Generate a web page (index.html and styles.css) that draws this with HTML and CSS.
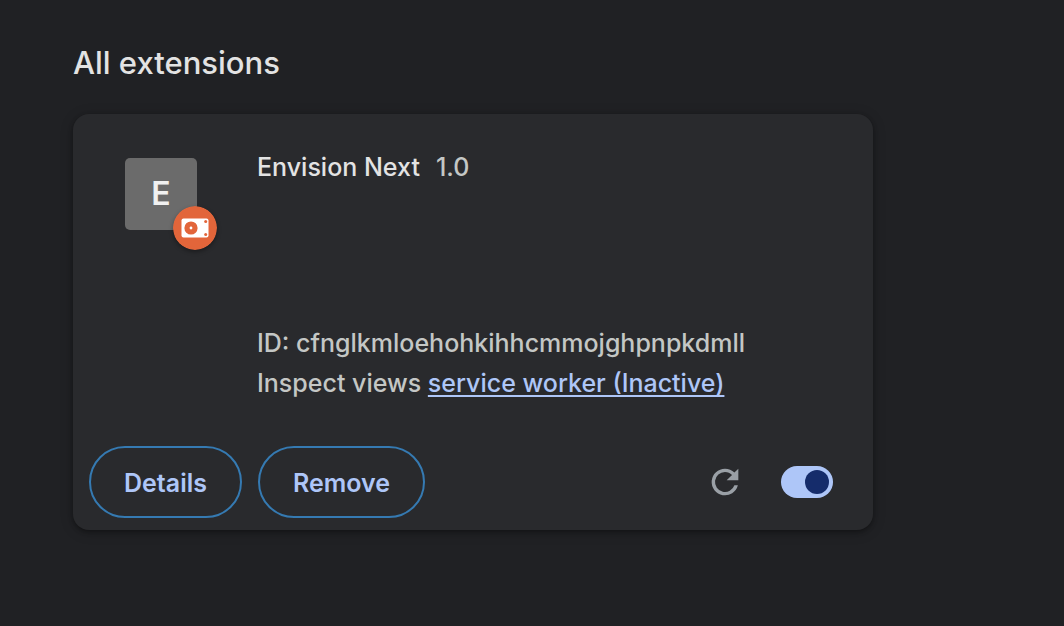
FILE: index.html
```html
<!DOCTYPE html>
<html lang="en">
<head>
<meta charset="utf-8">
<meta name="viewport" content="width=device-width, initial-scale=1">
<title>Extensions</title>
<link rel="stylesheet" href="styles.css">
</head>
<body>
<main class="page">
  <h1 class="heading">All extensions</h1>
  <article class="card">
    <div class="summary">
      <div class="icon-wrap">
        <div class="app-icon">E</div>
        <svg class="badge" viewBox="0 0 44 44" role="img" aria-label="Unpacked extension">
          <circle cx="22" cy="22" r="22" fill="#e2653a"/>
          <rect x="8.5" y="12.5" width="27" height="19" rx="2" fill="#fff"/>
          <circle cx="18" cy="22" r="6.6" fill="#e2653a"/>
          <circle cx="18" cy="22" r="1.4" fill="#fff"/>
          <circle cx="32.7" cy="15.5" r="1.5" fill="#e2653a"/>
          <circle cx="32.7" cy="28.5" r="1.5" fill="#e2653a"/>
        </svg>
      </div>
      <div class="content">
        <div class="title-row">
          <h2 class="name">Envision Next</h2>
          <span class="version">1.0</span>
        </div>
        <div class="info">
          <div>ID: cfnglkmloehohkihhcmmojghpnpkdmll</div>
          <div>Inspect views <a class="link" href="#">service worker (Inactive)</a></div>
        </div>
      </div>
    </div>
    <div class="actions">
      <button class="button" type="button">Details</button>
      <button class="button" type="button">Remove</button>
      <button class="reload" type="button" aria-label="Reload">
        <svg viewBox="0 0 24 24" width="40" height="40"><path fill="#9aa0a6" d="M17.65 6.35A7.96 7.96 0 0 0 12 4a8 8 0 1 0 7.73 10h-2.08A6 6 0 1 1 12 6c1.66 0 3.14.69 4.22 1.78L13 11h7V4z"/></svg>
      </button>
      <input class="toggle" type="checkbox" role="switch" aria-label="Enable Envision Next" checked>
    </div>
  </article>
</main>
</body>
</html>
```
FILE: styles.css
```css
* {
  box-sizing: border-box;
}

body {
  margin: 0;
  background: #202124;
  color: #e3e3e3;
  font-family: Inter, "Liberation Sans", sans-serif;
  font-size: 25px;
  font-weight: 500;
  line-height: 40px;
}

.page {
  padding: 42px 73px;
}

.heading {
  margin: 0 0 30px;
  font-size: 31px;
  font-weight: 500;
  line-height: 42px;
}

.card {
  max-width: 800px;
  border-radius: 16px;
  background: #292a2d;
  box-shadow: 0 2px 4px rgba(0, 0, 0, 0.3), 0 2px 12px 2px rgba(0, 0, 0, 0.15);
}

.summary {
  display: flex;
  gap: 60px;
  min-height: 320px;
  padding: 33px 40px 30px 52px;
}

.icon-wrap {
  position: relative;
  flex: none;
  width: 72px;
  height: 72px;
  margin-top: 11px;
}

.app-icon {
  width: 72px;
  height: 72px;
  border-radius: 5px;
  background: #6b6b6b;
  color: #f1f1f1;
  font-size: 32px;
  font-weight: 600;
  line-height: 72px;
  text-align: center;
}

.badge {
  position: absolute;
  right: -20px;
  bottom: -20px;
  width: 44px;
  height: 44px;
  border-radius: 50%;
  box-shadow: 0 2px 4px rgba(0, 0, 0, 0.35);
}

.content {
  display: flex;
  flex: 1;
  flex-direction: column;
  justify-content: space-between;
  min-width: 0;
}

.title-row {
  display: flex;
  gap: 16px;
}

.name {
  margin: 0;
  font-size: 25px;
  font-weight: 500;
}

.version,
.info {
  color: #c4c7c5;
}

.info {
  padding-bottom: 1px;
  overflow-wrap: anywhere;
}

.link {
  color: #aec6f8;
  text-decoration-thickness: 2px;
  text-underline-offset: 3px;
}

.actions {
  display: flex;
  align-items: center;
  gap: 16px;
  padding: 12px 40px 12px 16px;
}

.button {
  height: 72px;
  padding: 2px 33px 0;
  border: 2px solid #357ab2;
  border-radius: 36px;
  background: transparent;
  color: #aec6f8;
  font-family: inherit;
  font-size: 25px;
  font-weight: 600;
}

.reload {
  display: flex;
  margin: 0 20px 0 auto;
  padding: 0;
  border: 0;
  background: transparent;
}

.toggle {
  display: flex;
  align-items: center;
  justify-content: flex-end;
  width: 52px;
  height: 32px;
  margin: 0;
  padding: 4px;
  border-radius: 16px;
  background: #aec6f8;
  appearance: none;
}

.toggle::before {
  width: 24px;
  height: 24px;
  border-radius: 50%;
  background: #152c6b;
  content: "";
}

.toggle:not(:checked) {
  justify-content: flex-start;
}
```
